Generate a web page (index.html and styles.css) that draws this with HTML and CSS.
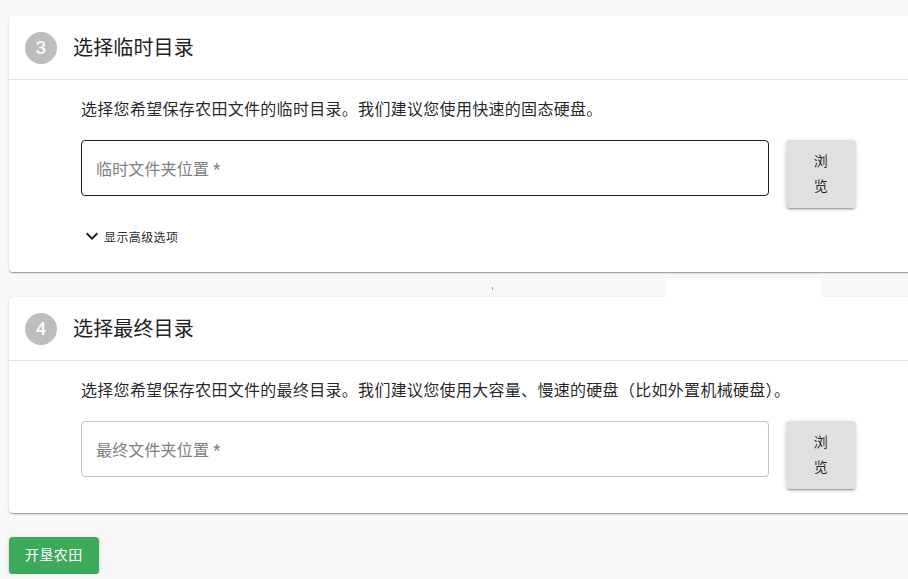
FILE: index.html
```html
<!DOCTYPE html>
<html lang="zh">
<head>
<meta charset="utf-8">
<link rel="stylesheet" href="styles.css">
</head>
<body>
<div class="page">
  <section class="card">
    <header class="card-head">
      <span class="badge">3</span>
      <h2 class="title">选择临时目录</h2>
    </header>
    <div class="card-body">
      <p class="desc">选择您希望保存农田文件的临时目录。我们建议您使用快速的固态硬盘。</p>
      <div class="row">
        <div class="field field-active"><span class="placeholder">临时文件夹位置 *</span></div>
        <button class="browse">浏览</button>
      </div>
      <div class="toggle">
        <svg class="chev" viewBox="0 0 24 24" width="24" height="24"><path d="M16.59 8.59L12 13.17 7.41 8.59 6 10l6 6 6-6z"/></svg>
        <span>显示高级选项</span>
      </div>
    </div>
  </section>

  <div class="gap">
    <span class="artifact-rect"></span>
    <span class="artifact-dot"></span>
  </div>

  <section class="card">
    <header class="card-head">
      <span class="badge">4</span>
      <h2 class="title">选择最终目录</h2>
    </header>
    <div class="card-body">
      <p class="desc">选择您希望保存农田文件的最终目录。我们建议您使用大容量、慢速的硬盘（比如外置机械硬盘）。</p>
      <div class="row">
        <div class="field"><span class="placeholder">最终文件夹位置 *</span></div>
        <button class="browse">浏览</button>
      </div>
    </div>
  </section>

  <div class="actions">
    <button class="primary">开垦农田</button>
  </div>
</div>
</body>
</html>
```

FILE: styles.css
```css
html, body {
  margin: 0;
  padding: 0;
  background: #f8f8f8;
  overflow: hidden;
}
body {
  font-family: Roboto, "Noto Sans CJK SC", sans-serif;
  color: rgba(0, 0, 0, 0.87);
}
.page {
  padding: 16px 0 0 9px;
  width: 940px;
}
.card {
  background: #fff;
  border-radius: 4px;
  box-shadow: 0 2px 1px -1px rgba(0,0,0,.2), 0 1px 1px 0 rgba(0,0,0,.14), 0 1px 3px 0 rgba(0,0,0,.12);
}
.card-head {
  height: 64px;
  box-sizing: border-box;
  display: flex;
  align-items: center;
  padding-left: 16px;
  border-bottom: 1px solid #e2e2e2;
}
.badge {
  width: 32px;
  height: 32px;
  border-radius: 50%;
  background: #bdbdbd;
  color: #fafafa;
  font-family: Roboto, "Liberation Sans", sans-serif;
  font-size: 19px;
  font-weight: 500;
  display: flex;
  align-items: center;
  justify-content: center;
  margin-right: 16px;
}
.title {
  margin: 0;
  font-size: 20px;
  font-weight: 400;
  line-height: 32px;
  letter-spacing: 0.15px;
  color: #222;
}
.card-body {
  padding: 18px 16px 24px 72px;
}
.desc {
  margin: 0 0 18px;
  font-size: 16px;
  line-height: 24px;
  letter-spacing: 0.3px;
}
.row {
  display: flex;
  align-items: flex-start;
  gap: 17px;
}
.field {
  width: 688px;
  height: 56px;
  box-sizing: border-box;
  border: 1px solid #c4c4c4;
  border-radius: 4px;
  display: flex;
  align-items: center;
  padding-left: 14px;
}
.field-active {
  border-color: rgba(0,0,0,.87);
}
.placeholder {
  font-size: 16px;
  color: #808080;
  letter-spacing: 0.15px;
}
.browse {
  width: 70px;
  height: 68px;
  padding: 9px 21px;
  box-sizing: border-box;
  border: 0;
  border-radius: 4px;
  background: #e0e0e0;
  color: rgba(0,0,0,.87);
  font-family: inherit;
  font-size: 14px;
  line-height: 25px;
  letter-spacing: 0.4px;
  box-shadow: 0 3px 1px -2px rgba(0,0,0,.2), 0 2px 2px 0 rgba(0,0,0,.14), 0 1px 5px 0 rgba(0,0,0,.12);
}
.toggle {
  display: flex;
  align-items: center;
  height: 24px;
  margin-top: 16px;
  margin-left: -1px;
  font-size: 12px;
  letter-spacing: 0.4px;
}
.chev {
  fill: #222;
  display: block;
}
.gap {
  height: 25px;
  position: relative;
}
.artifact-rect {
  position: absolute;
  left: 657px;
  top: 6px;
  width: 155px;
  height: 19px;
  background: #fff;
}
.artifact-dot {
  position: absolute;
  left: 483px;
  top: 15px;
  width: 1px;
  height: 3px;
  background: #f08080;
}
.actions {
  padding-top: 24px;
}
.primary {
  height: 37px;
  padding: 6px 16px;
  border: 0;
  border-radius: 4px;
  background: #3bab5b;
  color: #fff;
  font-family: inherit;
  font-size: 14px;
  font-weight: 400;
  letter-spacing: 0.4px;
  line-height: 25px;
  box-shadow: 0 3px 1px -2px rgba(0,0,0,.2), 0 2px 2px 0 rgba(0,0,0,.14), 0 1px 5px 0 rgba(0,0,0,.12);
}
```
